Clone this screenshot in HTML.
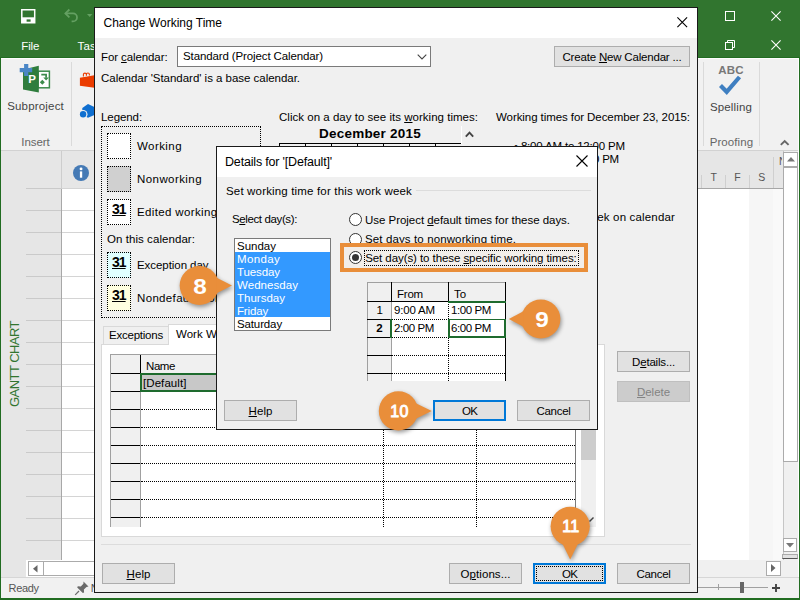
<!DOCTYPE html>
<html lang="en"><head><meta charset="utf-8"><title>Change Working Time</title>
<style>
html,body{margin:0;padding:0;}
body{width:800px;height:600px;overflow:hidden;background:#fff;font-family:"Liberation Sans",sans-serif;}
#root{position:relative;width:800px;height:600px;overflow:hidden;background:#fff;}
.a{position:absolute;box-sizing:border-box;}
.t{position:absolute;white-space:nowrap;line-height:1;}
svg{position:absolute;overflow:visible;}
u{text-decoration:underline;text-underline-offset:1px;}
.btn{background:#e1e1e1;border:1px solid #adadad;}
.dot{border:1px dotted #000;}

</style></head>
<body>
<div id="root">
<div class="a " style="left:0px;top:0px;width:800px;height:600px;background:#fff;"></div>
<div class="a " style="left:0px;top:0px;width:800px;height:58px;background:#31752f;"></div>
<div class="a " style="left:0px;top:58px;width:800px;height:93px;background:#f1f1f1;border-bottom:1px solid #d2d2d2;"></div>
<svg style="left:21px;top:9px" width="15" height="15" viewBox="0 0 15 15"><path d="M0.8 0.8h12.9v12.9H0.8z" fill="none" stroke="#fff" stroke-width="1.5"/><path d="M0.8 8.3h12.9v5.4H0.8z" fill="#fff"/><rect x="5.6" y="10.4" width="4" height="2.3" fill="#31752f"/><rect x="3" y="12.7" width="1.3" height="1" fill="#31752f" opacity="0"/></svg>
<svg style="left:63px;top:8px" width="17" height="15" viewBox="0 0 17 15"><path d="M2.4 5.4H10a4 4 0 0 1 0 8H8.6" fill="none" stroke="#64a062" stroke-width="1.8"/><path d="M6.4 1.5L2.4 5.4l4 3.9" fill="none" stroke="#64a062" stroke-width="1.8"/></svg>
<svg style="left:86.5px;top:13.8px" width="6" height="4" viewBox="0 0 6 4"><path d="M0 0h5.4L2.7 3z" fill="#64a062"/></svg>
<span id="t1" class="t" style="left:21.3px;top:41.07px;font-size:11.5px;color:#fff;letter-spacing:-0.183px;">File</span>
<span id="t2" class="t" style="left:77.5px;top:41.07px;font-size:11.5px;color:#fff;letter-spacing:0.211px;">Task</span>
<div class="a " style="left:725px;top:11px;width:10px;height:10px;border:1px solid #fff;"></div>
<svg style="left:771px;top:11px" width="10" height="10" viewBox="0 0 10 10"><path d="M0.4 0.4l9.2 9.2M9.6 0.4l-9.2 9.2" stroke="#fff" stroke-width="1.1" fill="none"/></svg>
<div class="a " style="left:725px;top:42px;width:8px;height:8px;border:1px solid #fff;"></div>
<svg style="left:727px;top:40px" width="9" height="9" viewBox="0 0 9 9"><path d="M0.5 2V0.5H7.5V7.5H6" stroke="#fff" stroke-width="1" fill="none"/></svg>
<svg style="left:771px;top:40px" width="10" height="10" viewBox="0 0 10 10"><path d="M0.4 0.4l9.2 9.2M9.6 0.4l-9.2 9.2" stroke="#fff" stroke-width="1.1" fill="none"/></svg>
<svg style="left:0;top:0" width="100" height="100" viewBox="0 0 100 100"><rect x="38" y="71.2" width="11.4" height="16.6" fill="#fff" stroke="#3c8b4b" stroke-width="1.5"/><path d="M41.3 74.6h4.8v3.2" fill="none" stroke="#3c8b4b" stroke-width="1.7"/><path d="M43.3 77.4h5.6l-2.8 3.2z" fill="#3c8b4b"/><path d="M42.3 79.8l2.5 2.5-2.5 2.5-2.5-2.5z" fill="#3c8b4b"/><path d="M23 69.6L38.8 65.7V92.6L23 89.6z" fill="#2f7d3d"/><path d="M24.1 64h4.2v4h3.9v4.2h-3.9v3.7h-4.2v-3.7h-4.4V68h4.4z" fill="#4a86c6"/></svg>
<span id="t3" class="t" style="left:28.2px;top:74.47px;font-size:11.5px;color:#fff;font-weight:700;">P</span>
<span id="t4" class="t" style="left:7.2px;top:101.17px;font-size:11.5px;color:#444;letter-spacing:0.182px;">Subproject</span>
<span id="t5" class="t" style="left:21.3px;top:136.97px;font-size:11.5px;color:#666;letter-spacing:-0.078px;">Insert</span>
<div class="a " style="left:71px;top:62px;width:1px;height:84px;background:#dadada;"></div>
<svg style="left:0;top:0" width="100" height="130" viewBox="0 0 100 130"><path d="M79.9 77.7L94.4 75.2V87.8L79.9 85.8z" fill="#eb3c00"/><path d="M83.4 76.6v-2a1.5 1.5 0 0 1 3 0v1.2M86.4 75.4v-0.9a1.5 1.5 0 0 1 3 0v0.9" stroke="#eb3c00" stroke-width="1.1" fill="none"/><path d="M82.3 108L88 104.1l6.4 2.9v8L88 117.8l-5.7-3z" fill="#0f6fd0"/><circle cx="83.1" cy="114.3" r="4.4" fill="#f1f1f1"/><circle cx="83.1" cy="114.3" r="3.2" fill="#0f6fd0"/></svg>
<div class="a " style="left:703px;top:62px;width:1px;height:84px;background:#dadada;"></div>
<div class="a " style="left:759px;top:62px;width:1px;height:84px;background:#dadada;"></div>
<span id="t6" class="t" style="left:718.2px;top:64.67px;font-size:11.5px;color:#787878;font-weight:700;letter-spacing:0.226px;">ABC</span>
<svg style="left:718px;top:75px" width="24" height="20" viewBox="0 0 24 20"><path d="M2.5 10.5l6.2 6.3L21.5 2" fill="none" stroke="#3f7fc1" stroke-width="4.2"/></svg>
<span id="t7" class="t" style="left:710px;top:101.87px;font-size:11.5px;color:#444;letter-spacing:0.135px;">Spelling</span>
<span id="t8" class="t" style="left:709.7px;top:136.97px;font-size:11.5px;color:#666;letter-spacing:0.082px;">Proofing</span>
<svg style="left:779.5px;top:138.6px" width="10" height="7" viewBox="0 0 10 7"><path d="M0.8 5.9L4.7 2l3.9 3.9" fill="none" stroke="#666" stroke-width="1.9"/></svg>
<div class="a " style="left:0px;top:151px;width:62px;height:427px;background:#e6e6e6;"></div>
<div class="a " style="left:62px;top:151px;width:40px;height:38px;background:#e6e6e6;"></div>
<div class="a " style="left:61px;top:151px;width:1px;height:38px;background:#cdcdcd;"></div>
<div class="a " style="left:61px;top:189px;width:1px;height:371px;background:#a8a8a8;"></div>
<div class="a " style="left:26px;top:188px;width:35px;height:1px;background:#cacaca;"></div>
<div class="a " style="left:62px;top:188px;width:40px;height:1px;background:#d4d4d4;"></div>
<div class="a " style="left:26px;top:210px;width:35px;height:1px;background:#cacaca;"></div>
<div class="a " style="left:62px;top:210px;width:40px;height:1px;background:#d4d4d4;"></div>
<div class="a " style="left:26px;top:232px;width:35px;height:1px;background:#cacaca;"></div>
<div class="a " style="left:62px;top:232px;width:40px;height:1px;background:#d4d4d4;"></div>
<div class="a " style="left:26px;top:254px;width:35px;height:1px;background:#cacaca;"></div>
<div class="a " style="left:62px;top:254px;width:40px;height:1px;background:#d4d4d4;"></div>
<div class="a " style="left:26px;top:276px;width:35px;height:1px;background:#cacaca;"></div>
<div class="a " style="left:62px;top:276px;width:40px;height:1px;background:#d4d4d4;"></div>
<div class="a " style="left:26px;top:298px;width:35px;height:1px;background:#cacaca;"></div>
<div class="a " style="left:62px;top:298px;width:40px;height:1px;background:#d4d4d4;"></div>
<div class="a " style="left:26px;top:320px;width:35px;height:1px;background:#cacaca;"></div>
<div class="a " style="left:62px;top:320px;width:40px;height:1px;background:#d4d4d4;"></div>
<div class="a " style="left:26px;top:342px;width:35px;height:1px;background:#cacaca;"></div>
<div class="a " style="left:62px;top:342px;width:40px;height:1px;background:#d4d4d4;"></div>
<div class="a " style="left:26px;top:364px;width:35px;height:1px;background:#cacaca;"></div>
<div class="a " style="left:62px;top:364px;width:40px;height:1px;background:#d4d4d4;"></div>
<div class="a " style="left:26px;top:386px;width:35px;height:1px;background:#cacaca;"></div>
<div class="a " style="left:62px;top:386px;width:40px;height:1px;background:#d4d4d4;"></div>
<div class="a " style="left:26px;top:408px;width:35px;height:1px;background:#cacaca;"></div>
<div class="a " style="left:62px;top:408px;width:40px;height:1px;background:#d4d4d4;"></div>
<div class="a " style="left:26px;top:430px;width:35px;height:1px;background:#cacaca;"></div>
<div class="a " style="left:62px;top:430px;width:40px;height:1px;background:#d4d4d4;"></div>
<div class="a " style="left:26px;top:452px;width:35px;height:1px;background:#cacaca;"></div>
<div class="a " style="left:62px;top:452px;width:40px;height:1px;background:#d4d4d4;"></div>
<div class="a " style="left:26px;top:474px;width:35px;height:1px;background:#cacaca;"></div>
<div class="a " style="left:62px;top:474px;width:40px;height:1px;background:#d4d4d4;"></div>
<div class="a " style="left:26px;top:496px;width:35px;height:1px;background:#cacaca;"></div>
<div class="a " style="left:62px;top:496px;width:40px;height:1px;background:#d4d4d4;"></div>
<div class="a " style="left:26px;top:518px;width:35px;height:1px;background:#cacaca;"></div>
<div class="a " style="left:62px;top:518px;width:40px;height:1px;background:#d4d4d4;"></div>
<div class="a " style="left:26px;top:540px;width:35px;height:1px;background:#cacaca;"></div>
<div class="a " style="left:62px;top:540px;width:40px;height:1px;background:#d4d4d4;"></div>
<svg style="left:73px;top:165px" width="16" height="16" viewBox="0 0 16 16"><circle cx="8" cy="8" r="8" fill="#457ab5"/><rect x="6.9" y="6.4" width="2.3" height="6.3" fill="#fff"/><circle cx="8.05" cy="3.9" r="1.45" fill="#fff"/></svg>
<span class="t" style="left:14px;top:363.5px;font-size:13px;letter-spacing:-0.55px;color:#31752f;transform:translate(-50%,-50%) rotate(-90deg);">GANTT CHART</span>
<div class="a " style="left:26px;top:560px;width:80px;height:18px;background:#fff;"></div>
<div class="a " style="left:28px;top:561px;width:16px;height:15px;background:#fff;border:1px solid #ababab;"></div>
<svg style="left:33px;top:564.5px" width="5" height="8" viewBox="0 0 5 8"><path d="M4.5 0L0 3.8l4.5 3.8z" fill="#666"/></svg>
<div class="a " style="left:43px;top:561px;width:60px;height:15px;background:#fff;border:1px solid #ababab;"></div>
<div class="a " style="left:0px;top:577px;width:800px;height:23px;background:#f1f1f1;border-top:1px solid #d6d6d6;"></div>
<span id="t9" class="t" style="left:8.6px;top:582.69px;font-size:11px;color:#555;letter-spacing:-0.319px;">Ready</span>
<svg style="left:75px;top:581px" width="14" height="14" viewBox="0 0 14 14"><path d="M8.5 0.5l5 5-2 0.4-2.6 2.6 0.2 3-1.3 0.6-5.6-5.6 0.6-1.3 3 0.2 2.6-2.6z" fill="#6a6a6a"/><path d="M4 10l-3.8 3.8" stroke="#6a6a6a" stroke-width="1.2"/></svg>
<span id="t10" class="t" style="left:90.8px;top:582.69px;font-size:11px;color:#555;">N</span>
<div class="a " style="left:697px;top:151px;width:86px;height:38px;background:#e6e6e6;border-bottom:1px solid #a6a6a6;"></div>
<div class="a " style="left:749px;top:189px;width:24px;height:371px;background:#f6f6f6;"></div>
<div class="a " style="left:773px;top:189px;width:10px;height:371px;background:#f9f9f9;"></div>
<div class="a " style="left:773px;top:157px;width:1px;height:31px;background:#cfcfcf;"></div>
<div class="a " style="left:725px;top:175px;width:1px;height:13px;background:#cfcfcf;"></div>
<div class="a " style="left:749px;top:175px;width:1px;height:13px;background:#cfcfcf;"></div>
<div class="a " style="left:701px;top:175px;width:1px;height:13px;background:#cfcfcf;"></div>
<span id="t11" class="t" style="left:710.5px;top:171.91px;font-size:10.5px;color:#555;">T</span>
<span id="t12" class="t" style="left:734.3px;top:171.91px;font-size:10.5px;color:#555;">F</span>
<span id="t13" class="t" style="left:758.3px;top:171.91px;font-size:10.5px;color:#555;">S</span>
<span id="t14" class="t" style="left:779px;top:156.11px;font-size:10.5px;color:#555;width:3px;overflow:hidden;">N</span>
<div class="a " style="left:783px;top:151px;width:15px;height:409px;background:#f0f0f0;border-left:1px solid #c6c6c6;"></div>
<div class="a " style="left:783px;top:152px;width:15px;height:15px;background:#fff;border:1px solid #ababab;"></div>
<svg style="left:787px;top:157px" width="8" height="5" viewBox="0 0 8 5"><path d="M0 4.5L4 0l4 4.5z" fill="#777"/></svg>
<div class="a " style="left:783px;top:167px;width:15px;height:295px;background:#fff;border:1px solid #ababab;"></div>
<div class="a " style="left:783px;top:538px;width:14px;height:14px;background:#fff;border:1px solid #ababab;"></div>
<svg style="left:786px;top:543px" width="8" height="5" viewBox="0 0 8 5"><path d="M0 0h8L4 4.5z" fill="#777"/></svg>
<div class="a " style="left:782px;top:554px;width:16px;height:5px;background:#e1e1e1;border:1px solid #ababab;border-bottom:1px solid #555;"></div>
<div class="a " style="left:697px;top:560px;width:101px;height:17px;background:#f0f0f0;"></div>
<div class="a " style="left:766px;top:561px;width:15px;height:15px;background:#fff;border:1px solid #ababab;"></div>
<svg style="left:771px;top:564px" width="5" height="8" viewBox="0 0 5 8"><path d="M0 0l4.5 4L0 8z" fill="#666"/></svg>
<div class="a " style="left:697px;top:587px;width:71px;height:1px;background:#a0a0a0;"></div>
<div class="a " style="left:718px;top:584px;width:1px;height:6px;background:#a0a0a0;"></div>
<div class="a " style="left:740px;top:582px;width:4px;height:11px;background:#666;"></div>
<svg style="left:771.5px;top:584px" width="8" height="8" viewBox="0 0 8 8"><path d="M4 0v8M0 4h8" stroke="#444" stroke-width="1.9"/></svg>
<div class="a " style="left:0px;top:57px;width:800px;height:1px;background:#216c21;"></div>
<div class="a " style="left:1px;top:58px;width:798px;height:1px;background:#fdfdfd;"></div>
<div class="a " style="left:798px;top:58px;width:1px;height:93px;background:#fdfdfd;"></div>
<div class="a " style="left:0px;top:57px;width:1px;height:543px;background:#216c21;"></div>
<div class="a " style="left:799px;top:57px;width:1px;height:543px;background:#216c21;"></div>
<div class="a " style="left:0px;top:598px;width:800px;height:2px;background:#216c21;"></div>
<div class="a " style="left:94px;top:7px;width:604px;height:586px;background:#f0f0f0;border:1px solid #1a1a1a;"></div>
<div class="a " style="left:95px;top:8px;width:602px;height:30px;background:#fff;"></div>
<span id="t15" class="t" style="left:103.5px;top:16.84px;font-size:12px;color:#000;">Change Working Time</span>
<svg style="left:677px;top:17px" width="10.5" height="10.5" viewBox="0 0 10.5 10.5"><path d="M0.4 0.4l9.7 9.7M10.1 0.4l-9.7 9.7" stroke="#000" stroke-width="1.1" fill="none"/></svg>
<span id="t16" class="t" style="left:101px;top:52.07px;font-size:11.5px;color:#000;letter-spacing:-0.097px;">For <u>c</u>alendar:</span>
<div class="a " style="left:177px;top:46px;width:254px;height:21px;background:#fff;border:1px solid #7a7a7a;"></div>
<span id="t17" class="t" style="left:183px;top:50.77px;font-size:11.5px;color:#000;letter-spacing:-0.118px;">Standard (Project Calendar)</span>
<svg style="left:417px;top:54px" width="10" height="6" viewBox="0 0 10 6"><path d="M0.7 0.7L5 5l4.3-4.3" fill="none" stroke="#444" stroke-width="1.1"/></svg>
<div class="a btn" style="left:554px;top:46px;width:136px;height:21px;"></div>
<span id="t18" class="t" style="left:622.0px;top:52.27px;font-size:11.5px;color:#000;letter-spacing:-0.191px;transform:translateX(-50%);">Create <u>N</u>ew Calendar ...</span>
<span id="t19" class="t" style="left:101px;top:73.47px;font-size:11.5px;color:#000;letter-spacing:-0.026px;">Calendar 'Standard' is a base calendar.</span>
<span id="t20" class="t" style="left:101px;top:112.27px;font-size:11.5px;color:#000;letter-spacing:-0.083px;">Legend:</span>
<div class="a dot" style="left:101px;top:126px;width:160px;height:192px;"></div>
<div class="a dot" style="left:107px;top:133px;width:24px;height:26px;background:#fff;"></div>
<div class="a dot" style="left:107px;top:166px;width:24px;height:26px;background:#d0d0d0;"></div>
<div class="a dot" style="left:107px;top:199px;width:24px;height:26px;background:#fff;"></div>
<div class="a dot" style="left:107px;top:252px;width:24px;height:26px;background:#e0ffff;"></div>
<div class="a dot" style="left:107px;top:285px;width:24px;height:26px;background:#ffffe0;"></div>
<span id="t21" class="t" style="left:112px;top:201.65px;font-size:14px;color:#000;font-weight:700;letter-spacing:-0.989px;"><u>31</u></span>
<span id="t22" class="t" style="left:112px;top:254.65px;font-size:14px;color:#000;font-weight:700;letter-spacing:-0.989px;"><u>31</u></span>
<span id="t23" class="t" style="left:112px;top:287.65px;font-size:14px;color:#000;font-weight:700;letter-spacing:-0.989px;"><u>31</u></span>
<span id="t24" class="t" style="left:137px;top:141.27px;font-size:11.5px;color:#000;letter-spacing:0.433px;">Working</span>
<span id="t25" class="t" style="left:137px;top:174.27px;font-size:11.5px;color:#000;letter-spacing:0.427px;">Nonworking</span>
<span id="t26" class="t" style="left:137px;top:207.27px;font-size:11.5px;color:#000;letter-spacing:0.355px;">Edited working hours</span>
<span id="t27" class="t" style="left:107px;top:234.27px;font-size:11.5px;color:#000;letter-spacing:0.062px;">On this calendar:</span>
<span id="t28" class="t" style="left:137px;top:260.27px;font-size:11.5px;color:#000;letter-spacing:-0.058px;">Exception day</span>
<span id="t29" class="t" style="left:137px;top:293.27px;font-size:11.5px;color:#000;letter-spacing:0.342px;">Nondefault work week</span>
<span id="t30" class="t" style="left:279px;top:112.27px;font-size:11.5px;color:#000;letter-spacing:0.021px;">Click on a day to see its <u>w</u>orking times:</span>
<span id="t31" class="t" style="left:319px;top:126.77px;font-size:13.5px;color:#000;font-weight:700;letter-spacing:0.225px;">December 2015</span>
<div class="a " style="left:279px;top:143px;width:183px;height:1px;background:#000;"></div>
<div class="a " style="left:461px;top:126px;width:1px;height:18px;background:#fff;"></div>
<div class="a " style="left:279px;top:143px;width:1px;height:4px;background:#000;"></div>
<div class="a " style="left:305px;top:143px;width:1px;height:4px;background:#000;"></div>
<div class="a " style="left:331px;top:143px;width:1px;height:4px;background:#000;"></div>
<div class="a " style="left:357px;top:143px;width:1px;height:4px;background:#000;"></div>
<div class="a " style="left:383px;top:143px;width:1px;height:4px;background:#000;"></div>
<div class="a " style="left:409px;top:143px;width:1px;height:4px;background:#000;"></div>
<div class="a " style="left:435px;top:143px;width:1px;height:4px;background:#000;"></div>
<svg style="left:465px;top:131px" width="9" height="6" viewBox="0 0 9 6"><path d="M0.8 5.6L4.5 1.7l3.7 3.9" fill="none" stroke="#444" stroke-width="1.9"/></svg>
<span id="t32" class="t" style="left:496px;top:112.27px;font-size:11.5px;color:#000;letter-spacing:-0.074px;">Working times for December 23, 2015:</span>
<span id="t33" class="t" style="left:514px;top:140.77px;font-size:11.5px;color:#000;letter-spacing:-0.173px;">• 8:00 AM to 12:00 PM</span>
<span id="t34" class="t" style="left:514px;top:154.27px;font-size:11.5px;color:#000;letter-spacing:-0.193px;">• 1:00 PM to 5:00 PM</span>
<span id="t35" class="t" style="left:496px;top:187.27px;font-size:11.5px;color:#000;">Based on:</span>
<span id="t36" class="t" style="left:513px;top:211.57px;font-size:11.5px;color:#000;letter-spacing:0.164px;">Default work week on calendar</span>
<div class="a " style="left:101px;top:344px;width:504px;height:192.5px;background:#fff;border:1px solid #d9d9d9;"></div>
<div class="a " style="left:103px;top:326px;width:66px;height:19px;background:#f0f0f0;border:1px solid #d9d9d9;"></div>
<div class="a " style="left:168px;top:324px;width:80px;height:21px;background:#fff;border:1px solid #d9d9d9;border-bottom:none;"></div>
<span id="t37" class="t" style="left:109px;top:330.47px;font-size:11.5px;color:#000;letter-spacing:-0.227px;">Exceptions</span>
<span id="t38" class="t" style="left:176px;top:328.77px;font-size:11.5px;color:#000;letter-spacing:0.023px;">Work Weeks</span>
<div class="a " style="left:110px;top:354px;width:466px;height:173px;background:#fff;"></div>
<div class="a " style="left:110px;top:354px;width:31px;height:173px;background:#f0f0f0;"></div>
<div class="a " style="left:110px;top:354px;width:466px;height:20px;background:#f0f0f0;border-top:1px solid #a0a0a0;"></div>
<div class="a " style="left:110px;top:354px;width:1px;height:173px;background:#a0a0a0;"></div>
<div class="a " style="left:140px;top:354px;width:1px;height:173px;background:#a0a0a0;"></div>
<div class="a " style="left:140px;top:355px;width:1px;height:19px;background:#000;"></div>
<span id="t39" class="t" style="left:146px;top:361.27px;font-size:11.5px;color:#000;letter-spacing:-0.422px;">Name</span>
<div class="a " style="left:111px;top:373px;width:29px;height:1px;background:#000;"></div>
<div class="a " style="left:111px;top:391px;width:29px;height:1px;background:#000;"></div>
<div class="a " style="left:141px;top:391px;width:434px;height:1px;border-top:1px dotted #000;"></div>
<div class="a " style="left:111px;top:409px;width:29px;height:1px;background:#000;"></div>
<div class="a " style="left:141px;top:409px;width:434px;height:1px;border-top:1px dotted #000;"></div>
<div class="a " style="left:111px;top:427px;width:29px;height:1px;background:#000;"></div>
<div class="a " style="left:141px;top:427px;width:434px;height:1px;border-top:1px dotted #000;"></div>
<div class="a " style="left:111px;top:445px;width:29px;height:1px;background:#000;"></div>
<div class="a " style="left:141px;top:445px;width:434px;height:1px;border-top:1px dotted #000;"></div>
<div class="a " style="left:111px;top:463px;width:29px;height:1px;background:#000;"></div>
<div class="a " style="left:141px;top:463px;width:434px;height:1px;border-top:1px dotted #000;"></div>
<div class="a " style="left:111px;top:481px;width:29px;height:1px;background:#000;"></div>
<div class="a " style="left:141px;top:481px;width:434px;height:1px;border-top:1px dotted #000;"></div>
<div class="a " style="left:111px;top:499px;width:29px;height:1px;background:#000;"></div>
<div class="a " style="left:141px;top:499px;width:434px;height:1px;border-top:1px dotted #000;"></div>
<div class="a " style="left:111px;top:517px;width:29px;height:1px;background:#000;"></div>
<div class="a " style="left:141px;top:517px;width:434px;height:1px;border-top:1px dotted #000;"></div>
<div class="a " style="left:111px;top:373px;width:465px;height:1px;background:#000;"></div>
<div class="a " style="left:383px;top:355px;width:1px;height:172px;border-left:1px dotted #000;"></div>
<div class="a " style="left:476px;top:355px;width:1px;height:172px;border-left:1px dotted #000;"></div>
<div class="a " style="left:575px;top:354px;width:1px;height:173px;background:#7a7a7a;"></div>
<div class="a " style="left:140px;top:373px;width:244px;height:19px;background:#c8c8c8;border:2px solid #1e6b2e;"></div>
<span id="t40" class="t" style="left:143px;top:378.27px;font-size:11.5px;color:#000;letter-spacing:0.075px;">[Default]</span>
<div class="a " style="left:581px;top:354px;width:15px;height:173px;background:#f0f0f0;"></div>
<div class="a " style="left:581px;top:425px;width:15px;height:35px;background:#cdcdcd;"></div>
<svg style="left:589px;top:517px" width="5" height="5" viewBox="0 0 5 5"><path d="M0.5 4.5L4.5 0.5" stroke="#444" stroke-width="1.5"/></svg>
<div class="a btn" style="left:617px;top:351px;width:73px;height:21px;"></div>
<span id="t41" class="t" style="left:653.5px;top:357.27px;font-size:11.5px;color:#000;letter-spacing:-0.177px;transform:translateX(-50%);">D<u>e</u>tails...</span>
<div class="a " style="left:617px;top:381px;width:73px;height:21px;background:#cccccc;border:1px solid #bfbfbf;"></div>
<span id="t42" class="t" style="left:653.5px;top:387.27px;font-size:11.5px;color:#838383;letter-spacing:-0.042px;transform:translateX(-50%);"><u>D</u>elete</span>
<div class="a " style="left:101px;top:544px;width:590px;height:1px;background:#dcdcdc;"></div>
<div class="a btn" style="left:102px;top:563px;width:73px;height:21px;"></div>
<span id="t43" class="t" style="left:138.5px;top:569.27px;font-size:11.5px;color:#000;letter-spacing:0.082px;transform:translateX(-50%);"><u>H</u>elp</span>
<div class="a btn" style="left:449px;top:563px;width:73px;height:21px;"></div>
<span id="t44" class="t" style="left:485.5px;top:569.27px;font-size:11.5px;color:#000;letter-spacing:0.075px;transform:translateX(-50%);">O<u>p</u>tions...</span>
<div class="a " style="left:533px;top:563px;width:73px;height:21px;background:#e1e1e1;border:2px solid #0078d7;"></div>
<span id="t45" class="t" style="left:569.5px;top:569.27px;font-size:11.5px;color:#000;letter-spacing:-0.812px;transform:translateX(-50%);">OK</span>
<div class="a " style="left:536px;top:566px;width:67px;height:15px;border:1px dotted #000;"></div>
<div class="a btn" style="left:617px;top:563px;width:73px;height:21px;"></div>
<span id="t46" class="t" style="left:653.5px;top:569.27px;font-size:11.5px;color:#000;letter-spacing:-0.302px;transform:translateX(-50%);">Cancel</span>
<div class="a " style="left:216px;top:146px;width:382px;height:284px;background:#f0f0f0;border:1px solid #1a1a1a;"></div>
<div class="a " style="left:217px;top:147px;width:380px;height:30px;background:#fff;"></div>
<span id="t47" class="t" style="left:225px;top:156.42px;font-size:12.5px;color:#000;letter-spacing:-0.177px;">Details for '[Default]'</span>
<svg style="left:576px;top:155px" width="12" height="12" viewBox="0 0 12 12"><path d="M0.5 0.5l11 11M11.5 0.5l-11 11" stroke="#000" stroke-width="1.1" fill="none"/></svg>
<span id="t48" class="t" style="left:226px;top:186.27px;font-size:11.5px;color:#000;letter-spacing:0.165px;">Set working time for this work week</span>
<div class="a " style="left:416px;top:190px;width:175px;height:1px;background:#dcdcdc;"></div>
<span id="t49" class="t" style="left:232px;top:214.27px;font-size:11.5px;color:#000;letter-spacing:-0.381px;">S<u>e</u>lect day(s):</span>
<div class="a " style="left:234px;top:238px;width:97px;height:93px;background:#fff;border:1px solid #7a7a7a;"></div>
<div class="a " style="left:235px;top:252px;width:95px;height:65px;background:#3399ff;"></div>
<span id="t50" class="t" style="left:237px;top:240.77px;font-size:11.5px;color:#000;letter-spacing:-0.003px;">Sunday</span>
<span id="t51" class="t" style="left:237px;top:253.77px;font-size:11.5px;color:#fff;letter-spacing:0.346px;">Monday</span>
<span id="t52" class="t" style="left:237px;top:266.77px;font-size:11.5px;color:#fff;letter-spacing:-0.098px;">Tuesday</span>
<span id="t53" class="t" style="left:237px;top:279.77px;font-size:11.5px;color:#fff;letter-spacing:0.052px;">Wednesday</span>
<span id="t54" class="t" style="left:237px;top:292.77px;font-size:11.5px;color:#fff;letter-spacing:0.008px;">Thursday</span>
<span id="t55" class="t" style="left:237px;top:305.77px;font-size:11.5px;color:#fff;letter-spacing:-0.159px;">Friday</span>
<span id="t56" class="t" style="left:237px;top:318.77px;font-size:11.5px;color:#000;letter-spacing:-0.129px;">Saturday</span>
<div class="a " style="left:349px;top:212.5px;width:13px;height:13px;background:#fff;border:1px solid #333;border-radius:50%;"></div>
<div class="a " style="left:349px;top:232.5px;width:13px;height:13px;background:#fff;border:1px solid #333;border-radius:50%;"></div>
<div class="a " style="left:349px;top:250.5px;width:13px;height:13px;background:#fff;border:1px solid #333;border-radius:50%;"></div>
<div class="a " style="left:352px;top:253.5px;width:7px;height:7px;background:#333;border-radius:50%;"></div>
<span id="t57" class="t" style="left:365px;top:214.77px;font-size:11.5px;color:#000;letter-spacing:-0.036px;">Use Project <u>d</u>efault times for these days.</span>
<span id="t58" class="t" style="left:365px;top:233.77px;font-size:11.5px;color:#000;letter-spacing:0.118px;">Set days to <u>n</u>onworking time.</span>
<div class="a " style="left:340px;top:242.8px;width:247.5px;height:29px;border:4px solid #e98e3a;background:#f2eeea;"></div>
<div class="a " style="left:349px;top:250.5px;width:13px;height:13px;background:#fff;border:1px solid #333;border-radius:50%;"></div>
<div class="a " style="left:352px;top:253.5px;width:7px;height:7px;background:#333;border-radius:50%;"></div>
<div class="a " style="left:364px;top:250px;width:215px;height:16px;border:1px dotted #000;"></div>
<span id="t59" class="t" style="left:365.2px;top:253.07px;font-size:11.5px;color:#000;letter-spacing:-0.076px;">Set day(s) to these <u>s</u>pecific working times:</span>
<div class="a " style="left:367px;top:282px;width:139px;height:99px;background:#fff;"></div>
<div class="a " style="left:367px;top:282px;width:139px;height:20px;background:#f0f0f0;border-top:1px solid #a0a0a0;"></div>
<div class="a " style="left:367px;top:282px;width:25px;height:99px;background:#f0f0f0;border-left:1px solid #a0a0a0;border-top:1px solid #a0a0a0;"></div>
<div class="a " style="left:391px;top:282px;width:1px;height:99px;background:#a0a0a0;"></div>
<div class="a " style="left:391px;top:282px;width:1px;height:20px;background:#000;"></div>
<div class="a " style="left:448px;top:282px;width:1px;height:20px;background:#000;"></div>
<div class="a " style="left:505px;top:282px;width:1px;height:99px;background:#000;"></div>
<div class="a " style="left:448px;top:301px;width:1px;height:80px;border-left:1px dotted #000;"></div>
<div class="a " style="left:367px;top:301px;width:139px;height:1px;background:#000;"></div>
<div class="a " style="left:367px;top:319px;width:25px;height:1px;background:#000;"></div>
<div class="a " style="left:392px;top:319px;width:113px;height:1px;border-top:1px dotted #000;"></div>
<div class="a " style="left:367px;top:337px;width:25px;height:1px;background:#000;"></div>
<div class="a " style="left:392px;top:337px;width:113px;height:1px;border-top:1px dotted #000;"></div>
<div class="a " style="left:367px;top:355px;width:25px;height:1px;background:#000;"></div>
<div class="a " style="left:392px;top:355px;width:113px;height:1px;border-top:1px dotted #000;"></div>
<div class="a " style="left:367px;top:373px;width:25px;height:1px;background:#000;"></div>
<div class="a " style="left:392px;top:373px;width:113px;height:1px;border-top:1px dotted #000;"></div>
<span id="t60" class="t" style="left:397px;top:289.27px;font-size:11.5px;color:#000;letter-spacing:-0.211px;">From</span>
<span id="t61" class="t" style="left:454px;top:289.27px;font-size:11.5px;color:#000;letter-spacing:-0.078px;">To</span>
<span id="t62" class="t" style="left:376.5px;top:305.27px;font-size:11.5px;color:#000;">1</span>
<span id="t63" class="t" style="left:376.3px;top:323.27px;font-size:11.5px;color:#000;font-weight:700;">2</span>
<span id="t64" class="t" style="left:394px;top:305.47px;font-size:11.5px;color:#000;letter-spacing:-0.172px;">9:00 AM</span>
<span id="t65" class="t" style="left:451px;top:305.47px;font-size:11.5px;color:#000;letter-spacing:-0.404px;">1:00 PM</span>
<span id="t66" class="t" style="left:394px;top:323.47px;font-size:11.5px;color:#000;letter-spacing:-0.404px;">2:00 PM</span>
<div class="a " style="left:448px;top:301px;width:58px;height:2px;background:#1e6b2e;"></div>
<div class="a " style="left:390px;top:319px;width:2px;height:19px;background:#1e6b2e;"></div>
<div class="a " style="left:448px;top:319px;width:58px;height:19px;background:#fff;border:2px solid #1e6b2e;border-top-width:1px;"></div>
<span id="t67" class="t" style="left:451px;top:323.47px;font-size:11.5px;color:#000;letter-spacing:-0.404px;">6:00 PM</span>
<div class="a btn" style="left:224px;top:400px;width:73px;height:21px;"></div>
<span id="t68" class="t" style="left:260.5px;top:406.27px;font-size:11.5px;color:#000;letter-spacing:0.082px;transform:translateX(-50%);"><u>H</u>elp</span>
<div class="a " style="left:433px;top:400px;width:73px;height:21px;background:#e1e1e1;border:2px solid #0078d7;"></div>
<span id="t69" class="t" style="left:469.5px;top:406.27px;font-size:11.5px;color:#000;letter-spacing:-0.812px;transform:translateX(-50%);">OK</span>
<div class="a btn" style="left:517px;top:400px;width:73px;height:21px;"></div>
<span id="t70" class="t" style="left:553.5px;top:406.27px;font-size:11.5px;color:#000;letter-spacing:-0.302px;transform:translateX(-50%);">Cancel</span>
<svg style="left:0;top:0;filter:drop-shadow(1px 2px 2px rgba(0,0,0,.4));" width="800" height="600"><circle cx="199.3" cy="285.5" r="19.6" fill="#e98e3a"/><polygon points="216.19301539707604,277.5 232,285.5 216.19301539707604,293.5" fill="#e98e3a"/></svg>
<span id="t71" class="t" style="left:200.3px;top:275.51px;font-size:22.5px;color:#fff;font-weight:700;transform:translateX(-50%);transform:translateX(-50%) scaleX(1.08);">8</span>
<svg style="left:0;top:0;filter:drop-shadow(1px 2px 2px rgba(0,0,0,.4));" width="800" height="600"><circle cx="540.8" cy="319.0" r="19.6" fill="#e98e3a"/><polygon points="523.9069846029239,311.0 508.8,319.0 523.9069846029239,327.0" fill="#e98e3a"/></svg>
<span id="t72" class="t" style="left:541.5999999999999px;top:309.01px;font-size:22.5px;color:#fff;font-weight:700;transform:translateX(-50%);transform:translateX(-50%) scaleX(1.08);">9</span>
<svg style="left:0;top:0;filter:drop-shadow(1px 2px 2px rgba(0,0,0,.4));" width="800" height="600"><circle cx="398.4" cy="410.9" r="19.6" fill="#e98e3a"/><polygon points="415.29301539707603,402.9 431.8,410.9 415.29301539707603,418.9" fill="#e98e3a"/></svg>
<span id="t73" class="t" style="left:399.59999999999997px;top:404.08px;font-size:16px;color:#fff;letter-spacing:0.502px;transform:translateX(-50%);-webkit-text-stroke:0.9px #fff;">10</span>
<svg style="left:0;top:0;filter:drop-shadow(1px 2px 2px rgba(0,0,0,.4));" width="800" height="600"><circle cx="570.2" cy="526.3" r="19.6" fill="#e98e3a"/><polygon points="562.2,543.193015397076 570.2,559.6 578.2,543.193015397076" fill="#e98e3a"/></svg>
<span id="t74" class="t" style="left:570.8000000000001px;top:519.48px;font-size:16px;color:#fff;letter-spacing:0.295px;transform:translateX(-50%);-webkit-text-stroke:0.9px #fff;">11</span>
</div>
</body></html>
